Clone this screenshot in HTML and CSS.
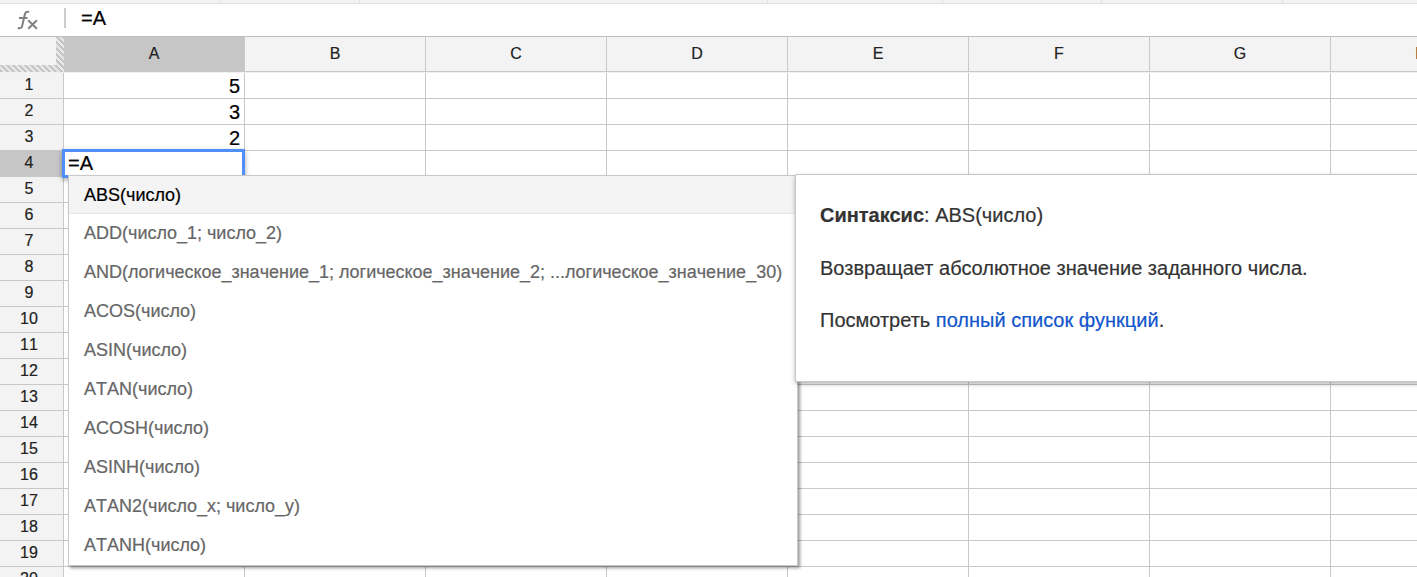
FILE: index.html
```
<!DOCTYPE html>
<html lang="ru">
<head>
<meta charset="utf-8">
<title>Таблица</title>
<link rel="stylesheet" href="styles.css">
</head>
<body>
<div class="app">
  <div class="toolbar"><i class="tab tab-1"></i><i class="tab tab-2"></i><i class="tab tab-3"></i><i class="tab tab-4"></i><i class="tab tab-5"></i><i class="tab tab-6"></i></div>
  <div class="formula-bar">
    <svg class="fx" width="24" height="24" viewBox="0 0 24 24" fill="none" stroke="#808080" stroke-width="2"><path d="M13.3 1.9C10.5 1.2 9.3 2.2 8.7 5L6.2 15.8C5.6 18.2 4.6 18.7 1.8 18.1M3 8H11.5M12.2 10.2L20.9 18.8M20.9 10.2L12.2 18.8"/></svg>
    <span class="separator"></span>
    <span class="formula">=A</span>
  </div>
  <div class="col-heads">
    <div class="corner"></div>
    <div class="col-head selected">A</div><div class="col-head">B</div><div class="col-head">C</div><div class="col-head">D</div><div class="col-head">E</div><div class="col-head">F</div><div class="col-head">G</div><div class="col-head">H</div>
  </div>
  <div class="grid" id="grid"></div>
  <div class="editor">=A</div>
  <div class="suggest">
    <div class="option active">ABS(число)</div>
    <div class="option">ADD(число_1; число_2)</div>
    <div class="option">AND(логическое_значение_1; логическое_значение_2; ...логическое_значение_30)</div>
    <div class="option">ACOS(число)</div>
    <div class="option">ASIN(число)</div>
    <div class="option">ATAN(число)</div>
    <div class="option">ACOSH(число)</div>
    <div class="option">ASINH(число)</div>
    <div class="option">ATAN2(число_x; число_y)</div>
    <div class="option">ATANH(число)</div>
  </div>
  <div class="help">
    <p><b>Синтаксис</b>: ABS(число)</p>
    <p>Возвращает абсолютное значение заданного числа.</p>
    <p>Посмотреть <a class="link">полный список функций</a>.</p>
  </div>
</div>
<script src="grid.js"></script>
</body>
</html>
```
FILE: styles.css
```
* { box-sizing: border-box; }
body { margin: 0; font-family: "Liberation Sans", Arial, sans-serif; font-kerning: none; background: #fff; -webkit-text-stroke: .2px; }
.app { position: relative; width: 1417px; height: 577px; overflow: hidden; }
.toolbar { display: flex; height: 4px; background: #f3f3f3; border-bottom: 1px solid #e0e0e0; }
.tab { flex: none; border-right: 1px solid #e0e0e0; }
.tab-1 { width: 221px; }
.tab-2 { width: 139px; }
.tab-3 { width: 408px; }
.tab-4 { width: 175px; }
.tab-5 { width: 159px; }
.tab-6 { width: 181px; }
.formula-bar { display: flex; height: 32px; align-items: flex-start; }
.fx { margin: 6px 0 0 16px; }
.separator { width: 2px; height: 20px; margin: 4px 0 0 24px; background: #ccc; }
.formula { margin-left: 15px; font-size: 20px; line-height: 28px; color: #000; }
.col-heads { display: flex; height: 37px; width: 1512px; border-top: 1px solid #bfbfbf; border-bottom: 1px solid #f0f0f0; }
.corner { flex: none; width: 64px; border-right: 8px solid transparent; border-bottom: 7px solid transparent; background: linear-gradient(#f3f3f3, #f3f3f3) padding-box, repeating-linear-gradient(45deg, #c6c6c6 0 2.6px, #e8e8e8 2.6px 4.25px) border-box; }
.col-head { flex: none; width: 181px; border-right: 1px solid #c8c8c8; border-bottom: 1px solid #c8c8c8; background: #f3f3f3; color: #222; font-size: 16px; line-height: 33px; text-align: center; }
.col-head.selected { background: #c6c6c6; }
.row { display: flex; width: 1512px; height: 26px; border-bottom: 1px solid #c8c8c8; }
.row-head { flex: none; width: 64px; padding-right: 5px; border-right: 1px solid #c8c8c8; background: #f3f3f3; color: #222; font-size: 16px; line-height: 24px; text-align: center; }
.row-head.selected { background: #c6c6c6; }
.cell { flex: none; width: 181px; padding-right: 4px; border-right: 1px solid #c8c8c8; font-size: 20px; line-height: 27px; text-align: right; }
.editor { position: absolute; left: 62px; top: 149px; width: 183px; height: 29px; padding-left: 3px; border: 3px solid #4f8ff7; background: #fff; box-shadow: 0 2px 5px rgba(0,0,0,.35); font-size: 20px; line-height: 22px; }
.suggest { position: absolute; left: 68px; top: 175px; width: 730px; height: 391px; border: 1px solid #c8c8c8; background: #fff; box-shadow: 2px 2px 3px rgba(0,0,0,.4); }
.option { height: 39px; padding-left: 15px; font-size: 18px; line-height: 38px; color: #666; white-space: nowrap; }
.option.active { height: 38px; background: #f4f4f4; border-bottom: 1px solid #e5e5e5; color: #000; }
.help { position: absolute; left: 795px; top: 174px; width: 640px; height: 208px; padding: 28px 24px; border: 1px solid #c8c8c8; border-radius: 2px; background: #fff; box-shadow: 0 2px 4px rgba(0,0,0,.3); font-size: 20px; line-height: 25px; color: #333; font-kerning: normal; }
.help p { margin: 0 0 27.5px; white-space: nowrap; }
.link { color: #15c; }
```
FILE: grid.js
```
const values = ['5', '3', '2'];
const grid = document.getElementById('grid');
for (let r = 1; r <= 20; r++) {
  const row = document.createElement('div');
  row.className = 'row';
  const head = document.createElement('div');
  head.className = r === 4 ? 'row-head selected' : 'row-head';
  head.textContent = r;
  row.append(head);
  for (let c = 0; c < 8; c++) {
    const cell = document.createElement('div');
    cell.className = 'cell';
    if (c === 0) cell.textContent = values[r - 1] || '';
    row.append(cell);
  }
  grid.append(row);
}
```
